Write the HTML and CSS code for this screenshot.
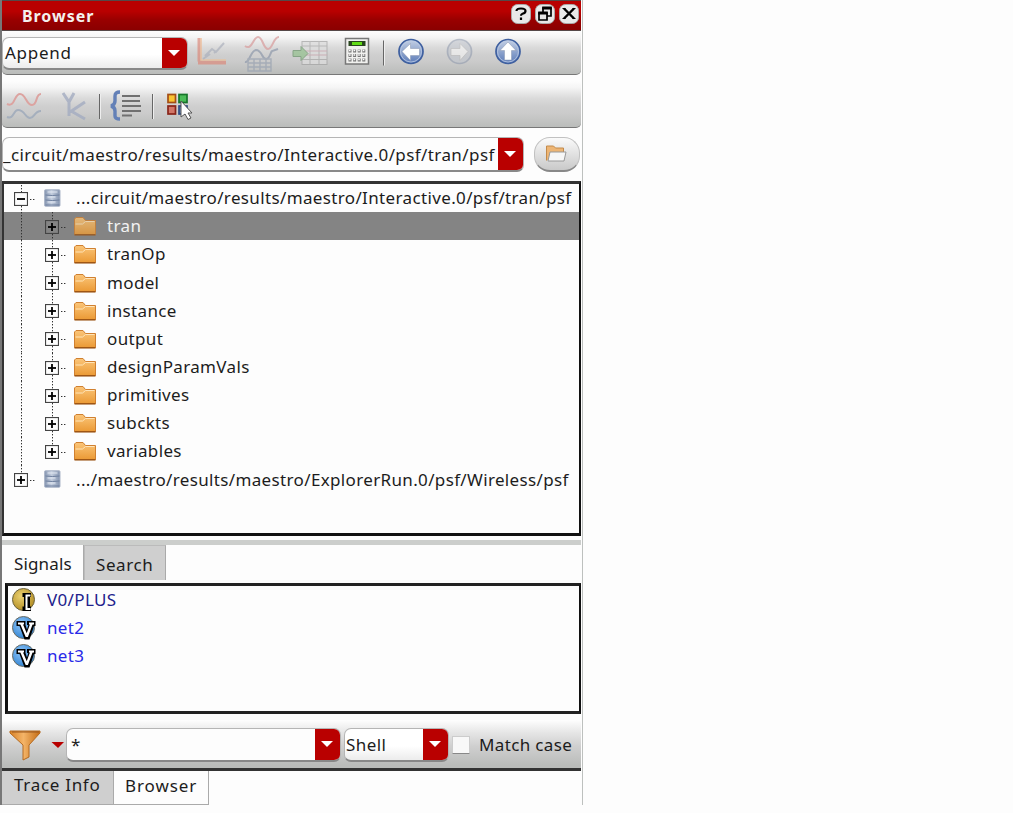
FILE: index.html
```html
<!DOCTYPE html>
<html lang="en">
<head>
<meta charset="utf-8">
<title>Browser</title>
<link rel="stylesheet" href="styles.css">
</head>
<body>
<svg class="defs" width="0" height="0">
  <defs>
    <linearGradient id="gFolder" x1="0" y1="0" x2="0" y2="1"><stop offset="0" stop-color="#fbc67a"/><stop offset="1" stop-color="#eb9a35"/></linearGradient>
    <linearGradient id="gBlue" x1="0" y1="0" x2="0" y2="1"><stop offset="0" stop-color="#c5d0e4"/><stop offset="1" stop-color="#5b7bb8"/></linearGradient>
    <linearGradient id="gDb" x1="0" y1="0" x2="1" y2="0"><stop offset="0" stop-color="#8595b0"/><stop offset=".45" stop-color="#c5cfdf"/><stop offset="1" stop-color="#8292ae"/></linearGradient>
    <linearGradient id="gFunnel" x1="0" y1="0" x2="1" y2="0"><stop offset="0" stop-color="#d98226"/><stop offset=".45" stop-color="#f4b468"/><stop offset="1" stop-color="#c46c14"/></linearGradient>
    <radialGradient id="gGold" cx=".4" cy=".35" r=".7"><stop offset="0" stop-color="#ecd272"/><stop offset="1" stop-color="#b08a20"/></radialGradient>
    <radialGradient id="gVolt" cx=".4" cy=".35" r=".7"><stop offset="0" stop-color="#8fc6fa"/><stop offset="1" stop-color="#2c80d0"/></radialGradient>
    <symbol id="folder" viewBox="0 0 24 20">
      <path d="M1.500 18.500V3L3 1.500h7l2.500 3h10v14z" fill="url(#gFolder)" stroke="#d08030"/>
      <path d="M2.500 8h7l3-2.500h9" fill="none" stroke="#ffe4b8"/>
      <path d="M1.500 18.800h21" stroke="#9c5414" stroke-width="1.500"/>
    </symbol>
    <symbol id="db" viewBox="0 0 18 18">
      <rect x="1" y=".7" width="15.500" height="16.600" rx="1" fill="url(#gDb)" stroke="#aeb8ca"/>
      <path d="M2 6q7 1 14 0M2 11q7 1 14 0M2 16h14" fill="none" stroke="#6d7f9e"/>
      <path d="M4 3h10M4 8h8M4 13h8" stroke="#e4eaf4"/>
    </symbol>
    <symbol id="box" viewBox="0 0 14 14">
      <rect x=".5" y=".5" width="13" height="13" fill="none" stroke="#444" stroke-width="1.200"/>
      <path d="M3 7h8" stroke="#000" stroke-width="1.800"/>
    </symbol>
    <symbol id="branch" viewBox="0 0 65 29">
      <path d="M17.500 0v29M48.500 0v8M48.500 22v7M57 15.500h6" fill="none" stroke="#333" stroke-dasharray="1.400 1.600"/>
      <use href="#box" x="41" y="8" width="14" height="14"/><path d="M48 11v8" stroke="#000" stroke-width="1.800"/>
    </symbol>
    <symbol id="branch-last" viewBox="0 0 65 29">
      <path d="M17.500 0v29M48.500 0v8M57 15.500h6" fill="none" stroke="#333" stroke-dasharray="1.400 1.600"/>
      <use href="#box" x="41" y="8" width="14" height="14"/><path d="M48 11v8" stroke="#000" stroke-width="1.800"/>
    </symbol>
    <symbol id="volt" viewBox="0 0 24 24">
      <circle cx="11.500" cy="11.500" r="11" fill="url(#gVolt)" stroke="#6b6b60"/>
      <path d="M4.500 5h9v4l1.500 4.500L16.300 9H15V5h8.500v5H22l-4.500 13.500h-5L7.500 10h-3z" fill="#000"/>
      <path d="M6 7.500h6M17 7.500h5" stroke="#fff" stroke-width="2"/><path d="M9.300 7.500L14.800 20.500L19.600 7.500" fill="none" stroke="#fff" stroke-width="2.400" stroke-linejoin="bevel"/>
    </symbol>
  </defs>
</svg>
<main class="panel">
  <header class="title"><span class="title-text">Browser</span>
    <div class="win">
      <svg class="wbtn" viewBox="0 0 20 20"><rect x=".5" y=".5" width="19" height="19" rx="6" fill="#e9e9e9" stroke="#aaa"/><path d="M5.500 7q0-2.500 4.500-2.500T14.500 7q0 2-3 2.800-1.500.5-1.500 2M10 13.500v2.500" fill="none" stroke="#000" stroke-width="2.200"/></svg>
      <svg class="wbtn" viewBox="0 0 20 20"><rect x=".5" y=".5" width="19" height="19" rx="6" fill="#e9e9e9" stroke="#aaa"/><path d="M8 8V4h8v8h-4M4 9h8v7H4z" fill="none" stroke="#000" stroke-width="1.700"/><path d="M7.200 4h9.600M3.200 9h9.600" stroke="#000" stroke-width="3"/></svg>
      <svg class="wbtn" viewBox="0 0 20 20"><rect x=".5" y=".5" width="19" height="19" rx="6" fill="#e9e9e9" stroke="#aaa"/><path d="M5 4.500l10 10M15 4.500l-10 10" stroke="#000" stroke-width="2.400"/><path d="M3.500 4.500h3M13.500 4.500h3M3.500 14.500h3M13.500 14.500h3" stroke="#000"/></svg>
    </div>
  </header>
  <section class="bar bar-one">
    <div class="combo append"><span class="value">Append</span><span class="drop"></span></div>
    <svg class="tools" viewBox="0 0 390 44" width="390" height="44">
      <g opacity=".65"><path d="M10.500 7v23.500M9 31.500h28" fill="none" stroke="#dc8576" stroke-width="4"/><path d="M12 7v22h25" fill="none" stroke="#f2bf90" stroke-width="1.500"/><path d="M16 25l7-7 4 3 8-9M14 28l7-5M25 22l4-3" fill="none" stroke="#a9aebb" stroke-width="2"/></g>
      <g opacity=".75" fill="none"><path d="M56 15c7 5 8-9 13-9s5 12 10 12 5-12 11-12" stroke="#d9a0a0" stroke-width="2"/><path d="M56 31c5 1 5-11 11-12 6 0 6 9 10 9s4-6 6-8l6-2" stroke="#929cad" stroke-width="2"/><path d="M59 28h23v12H59zM59 32h23M59 36h23M65 28v12M71 28v12M77 28v12" stroke="#9ba4b2" stroke-width="1.400"/></g>
      <g opacity=".7"><rect x="113" y="10.500" width="25" height="23" fill="#dedede" stroke="#a2a2a2"/><path d="M113 15h25M113 28.500h25M121 10v23M130 10v23" stroke="#a8a8a8"/><path d="M113 20h25M113 24h25" stroke="#c8a0aa"/><path d="M104 19.500h8v-4l7 7-7 7v-4h-8z" fill="#93c08d" stroke="#699268"/></g>
      <g><rect x="156.500" y="7.500" width="23" height="25.500" fill="#f1f1ef" stroke="#777" stroke-width="1.500"/><rect x="159.500" y="10" width="17" height="5" fill="#28451e"/><path d="M163 12.500h10" stroke="#61dc15" stroke-width="3"/><g stroke="#777" stroke-width="3" stroke-dasharray="3 1.600"><path d="M159.500 20h17M159.500 24.500h17M159.500 29h17"/></g><g stroke="#fff" stroke-width="1.300" stroke-dasharray="1.600 3"><path d="M160 19.500h17M160 24h17M160 28.500h17"/></g></g>
      <path d="M194.500 9.500v25" stroke="#666"/><path d="M195.500 9.500v25" stroke="#eee"/>
      <g><circle cx="222" cy="20.500" r="12" fill="url(#gBlue)" stroke="#3e5f9f" stroke-width="1.700"/><circle cx="222" cy="20.500" r="10.500" fill="none" stroke="#bccbe5" stroke-width=".8"/><path d="M213 20.500l8.500-8v5h9v7h-9v5z" fill="#fff" stroke="#8695ae" stroke-width=".5"/></g>
      <g opacity=".55"><circle cx="270.500" cy="20.500" r="12" fill="#c0c5ce" stroke="#8b96ab" stroke-width="1.700"/><path d="M279 20.500l-8-8v5h-9v7h9v5z" fill="#fafafa" stroke="#aaa" stroke-width=".7"/></g>
      <g><circle cx="319" cy="20.500" r="12" fill="url(#gBlue)" stroke="#3e5f9f" stroke-width="1.700"/><circle cx="319" cy="20.500" r="10.500" fill="none" stroke="#bccbe5" stroke-width=".8"/><path d="M319 11l8 8.500h-4.500V29h-7v-9.500H311z" fill="#fff" stroke="#8695ae" stroke-width=".5"/></g>
    </svg>
  </section>
  <section class="bar bar-two">
    <svg viewBox="0 0 210 47" width="210" height="47">
      <g fill="none" stroke-width="2"><path d="M5 23c8 4 7-10 13-10 6 0 6 11 12 11s3-11 9-11" stroke="#dca3a0"/><path d="M5 36c7 3 6-7 11-7 7 0 7 8 12 8s4-7 11-7" stroke="#a5afbd"/></g>
      <path d="M61 12l6 9 5-9M67 21v14M68 31l15-10M69 30l14 8" fill="none" stroke="#a2abc0" stroke-width="3" opacity=".8"/>
      <path d="M97.500 13v25M150.500 13v25" stroke="#666"/><path d="M98.500 13v25M151.500 13v25" stroke="#eee"/>
      <path d="M118 11q-5 0-5 4v5q0 4-4 5 4 1 4 5v5q0 3 5 3" fill="none" stroke="#6380b7" stroke-width="3.400"/>
      <path d="M120 15h18M120 20h18M120 25h19M120 30h19M120 34.500h10" stroke="#707070" stroke-width="1.900"/>
      <g stroke-width="1.700"><rect x="166" y="13.500" width="7.500" height="8" fill="#f9c332" stroke="#a44e16"/><rect x="177" y="13.500" width="8" height="8" fill="#4abb57" stroke="#16752a"/><rect x="166" y="25" width="7.500" height="8" fill="#d17668" stroke="#882419"/><rect x="177" y="25" width="8" height="8" fill="#718bb8" stroke="#304d87"/></g>
      <path d="M179 20v16l4-3 3 5.500 3-1.500-3-5h4z" fill="#fff" stroke="#555"/>
    </svg>
  </section>
  <section class="pathrow">
    <div class="combo path"><span class="value">_circuit/maestro/results/maestro/Interactive.0/psf/tran/psf</span><span class="drop"></span></div>
    <button class="open" aria-label="Open folder"><svg viewBox="0 0 24 20" width="24" height="20"><path d="M2.500 17.500V3h7l2 2h8v4" fill="#edb574" stroke="#c38a4a"/><path d="M6 9h16l-2 9H4z" fill="#f7f7f7" stroke="#999"/></svg></button>
  </section>
  <ul class="tree">
    <li class="row"><svg class="root-art" viewBox="0 0 65 29"><path d="M17.500 1v7M17.500 22v7M26 15.500h6" stroke="#333" stroke-dasharray="1.400 1.600"/><use href="#box" x="10" y="8" width="14" height="14"/><use href="#db" x="39.500" y="5" width="18" height="18"/></svg><span class="root-text one">...circuit/maestro/results/maestro/Interactive.0/psf/tran/psf</span></li>
    <li class="row selected"><svg class="branch"><use href="#branch"/></svg><svg class="folder"><use href="#folder"/></svg><span>tran</span></li>
    <li class="row"><svg class="branch"><use href="#branch"/></svg><svg class="folder"><use href="#folder"/></svg><span>tranOp</span></li>
    <li class="row"><svg class="branch"><use href="#branch"/></svg><svg class="folder"><use href="#folder"/></svg><span>model</span></li>
    <li class="row"><svg class="branch"><use href="#branch"/></svg><svg class="folder"><use href="#folder"/></svg><span>instance</span></li>
    <li class="row"><svg class="branch"><use href="#branch"/></svg><svg class="folder"><use href="#folder"/></svg><span>output</span></li>
    <li class="row"><svg class="branch"><use href="#branch"/></svg><svg class="folder"><use href="#folder"/></svg><span>designParamVals</span></li>
    <li class="row"><svg class="branch"><use href="#branch"/></svg><svg class="folder"><use href="#folder"/></svg><span>primitives</span></li>
    <li class="row"><svg class="branch"><use href="#branch"/></svg><svg class="folder"><use href="#folder"/></svg><span>subckts</span></li>
    <li class="row"><svg class="branch"><use href="#branch-last"/></svg><svg class="folder"><use href="#folder"/></svg><span>variables</span></li>
    <li class="row"><svg class="root-art" viewBox="0 0 65 29"><path d="M17.500 0v8M26 15.500h6" stroke="#333" stroke-dasharray="1.400 1.600"/><use href="#box" x="10" y="8" width="14" height="14"/><path d="M17 11v8" stroke="#000" stroke-width="1.800"/><use href="#db" x="39.500" y="5" width="18" height="18"/></svg><span class="root-text two">.../maestro/results/maestro/ExplorerRun.0/psf/Wireless/psf</span></li>
  </ul>
  <div class="splitter"></div>
  <nav class="tabs"><span class="tab signals">Signals</span><span class="tab search">Search</span></nav>
  <ul class="signals-list">
    <li class="sig navy"><svg viewBox="0 0 24 24"><circle cx="11.500" cy="11.500" r="11" fill="url(#gGold)" stroke="#6b6340"/><path d="M10.500 5H19v4h-1v9.500h1V23h-8.500v-4.500H12V9h-1.500z" fill="#000"/><path d="M18.500 7.500h-4V21h4" fill="none" stroke="#fff" stroke-width="2"/></svg><span>V0/PLUS</span></li>
    <li class="sig"><svg><use href="#volt"/></svg><span>net2</span></li>
    <li class="sig"><svg><use href="#volt"/></svg><span>net3</span></li>
  </ul>
  <section class="bar filter">
    <svg class="funnel" viewBox="0 0 64 48" width="64" height="48"><path d="M8 10h30v2L27 24v12l-6 3V24L8 12z" fill="url(#gFunnel)" stroke="#b56a20"/><path d="M10 11h27" stroke="#9a561c"/><path d="M49.500 21h12.500l-6 6z" fill="#b80000"/></svg>
    <div class="combo pattern"><span class="value star">*</span><span class="drop"></span></div>
    <div class="combo shell"><span class="value">Shell</span><span class="drop"></span></div>
    <span class="check"></span><span class="match">Match case</span>
  </section>
  <nav class="bottom"><span class="btab trace">Trace Info</span><span class="btab active">Browser</span></nav>
</main>
</body>
</html>
```
FILE: styles.css
```css
* { box-sizing: border-box; }
body { margin: 0; background: #fdfdfd; color: #1c1c1c; font: 17px/28px "Noto Sans", "Open Sans", sans-serif; }
ul { list-style: none; margin: 0; padding: 0; }
svg { display: block; flex: none; }
span { white-space: nowrap; }
.defs { position: absolute; }
.panel { display: flex; flex-direction: column; width: 583px; height: 805px; border-left: 2px solid #777; border-right: 1px solid #bdc0be; padding-right: 1px; }
.panel > * { flex: none; }
.title { display: flex; align-items: center; justify-content: space-between; height: 31px; padding: 0 2px 3px 20px; border-top: 1px solid #554848; border-bottom: 1px solid #554848; background: linear-gradient(#b90000 0 35%, #990000 65%, #8a0000); color: #f4f0ee; font-weight: 700; font-size: 16px; letter-spacing: .95px; }
.title-text { padding-top: 4px; }
.win { display: flex; gap: 4px; }
.wbtn { width: 20px; height: 20px; }
.bar { display: flex; background: linear-gradient(#fdfdfd 0, #f5f5f5 14%, #dadada 38%, #cfcfcf 55%, #cbcbcb 70%, #babcba 100%); border-bottom: 1px solid #777; border-radius: 0 0 5px 5px; }
.bar-one { height: 44px; padding-top: 0; }
.bar-two { height: 47px; margin-top: 6px; }
.combo { display: flex; overflow: hidden; background: linear-gradient(#fff 55%, #ececec); border: 1px solid #b5b5b5; border-bottom: 2px solid #888; border-radius: 7px; }
.value { flex: 1; min-width: 0; padding-left: 1px; overflow: hidden; line-height: 29px; letter-spacing: .4px; }
.drop { display: flex; align-items: center; justify-content: center; width: 25px; background: #b90000; }
.drop::after { content: ""; border: 6px solid transparent; border-top-color: #fff; border-bottom: 0; margin-right: 2px; }
.append { width: 186px; height: 33px; margin-top: 6px; margin-right: 1px; }
.append .value { letter-spacing: .75px; padding-left: 2px; }
.pathrow { display: flex; height: 53px; padding-top: 9px; gap: 10px; }
.path { width: 522px; height: 35px; background: #fdfdfd; }
.path .value { line-height: 33px; padding-left: 0; letter-spacing: .41px; }
.open { display: flex; align-items: center; justify-content: center; width: 46px; height: 35px; padding: 0 3px 2px 0; background: linear-gradient(#fafafa, #c9c9c9); border: 1px solid #c1c1c1; border-bottom: 2px solid #888; border-radius: 16px; }
.tree { height: 355px; border: 2px solid #111; border-left-color: #333; border-top: 3px solid #333; border-bottom-width: 3px; background: #fdfdfd; }
.row { display: flex; height: 28.160px; align-items: center; }
.row span { letter-spacing: .35px; }
.selected { background: #848484; color: #f2f2f2; }
.branch, .root-art { width: 65px; height: 29px; }
.folder { width: 24px; height: 20px; margin: 0 10px 0 4px; }
.selected .folder { opacity: .8; }
.row .root-text { padding-left: 7px; }
.row .one { letter-spacing: .36px; }
.row .two { letter-spacing: .35px; }
.splitter { height: 5px; margin-top: 4px; background: #cccecc; }
.tabs { display: flex; height: 38px; }
.tab { height: 35px; border-right: 1px solid #aaa; letter-spacing: .15px; }
.signals { width: 82px; padding: 5px 0 0 12px; }
.search { width: 82px; padding: 5px 0 0 11px; background: #cfcfcf; border-left: 1px solid #bbb; border-top: 1px solid #bbb; letter-spacing: .6px; }
.signals-list { height: 131px; margin-left: 3px; border: 3px solid #111; border-top-color: #222; border-bottom-color: #222; border-right-width: 2px; }
.sig { display: flex; align-items: center; gap: 11px; height: 28.200px; padding-left: 4px; color: #2929e8; letter-spacing: .35px; }
.sig svg { width: 24px; height: 24px; }
.navy { color: #22228c; }
.filter { height: 57px; padding-top: 7px; align-items: center; border-bottom: 3px solid #333; background: linear-gradient(#fdfdfd 12%, #e5e5e5 35%, #cfcfcf 60%, #babcba 95%); border-radius: 0; }
.pattern { width: 275px; height: 34px; background: #fdfdfd; }
.pattern .value, .shell .value { line-height: 31px; }
.pattern .star { padding-left: 4px; }
.shell { width: 105px; height: 34px; margin-left: 3px; }
.check { width: 18px; height: 18px; margin-left: 3px; background: #f8f8f8; border: 1px solid #ccc; border-bottom-color: #888; }
.match { margin-left: 9px; letter-spacing: .35px; }
.bottom { display: flex; height: 34px; }
.btab { border-right: 1px solid #aaa; border-bottom: 1px solid #aaa; }
.trace { width: 112px; padding-left: 12px; background: #cfcfcf; letter-spacing: .7px; }
.active { width: 95px; padding: 1px 0 0 11px; letter-spacing: .9px; }
```
